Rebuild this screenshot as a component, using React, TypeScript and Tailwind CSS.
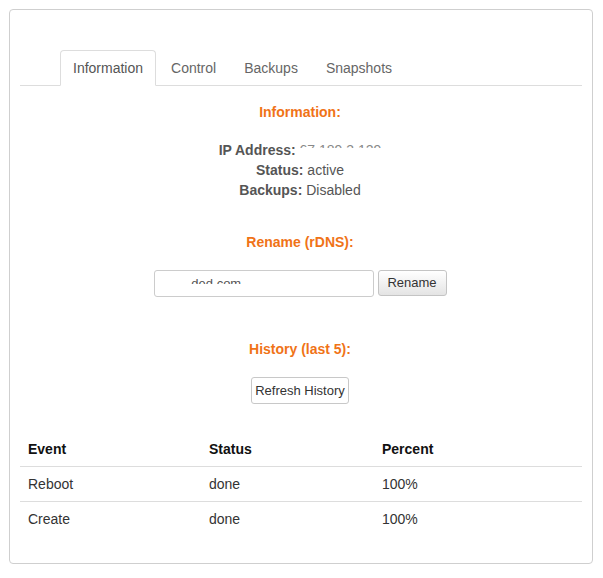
const tabs = ['Information', 'Control', 'Backups', 'Snapshots'];

const history = [
  { event: 'Reboot', status: 'done', percent: '100%' },
  { event: 'Create', status: 'done', percent: '100%' },
];

function SectionTitle({ children, className = '' }: { children: string; className?: string }) {
  return (
    <h4 className={`text-center text-[14px] font-bold leading-5 text-[#f07317] ${className}`}>{children}</h4>
  );
}

export default function App() {
  return (
    <div className="min-h-[578px] bg-white p-[9px] font-['Liberation_Sans',Arial,sans-serif] text-[14px] leading-5 text-[#555]">
      <div className="h-[555px] w-[584px] rounded-[4px] border border-[#cfcfcf] pl-[9px] pr-[11px] pt-[40px]">
        <div className="ml-px w-[562px]">
          {/* Tabs */}
          <ul className="flex border-b border-[#ddd] pl-[40px]">
            {tabs.map((tab, i) => (
              <li
                key={tab}
                className={`-mb-px mr-[2px] rounded-t-[4px] border px-[12px] py-[7px] ${
                  i === 0 ? 'border-[#ddd] border-b-white bg-white text-[#555]' : 'border-transparent text-[#666]'
                }`}
              >
                {tab}
              </li>
            ))}
          </ul>

          <div className="pr-[2px]">
            <SectionTitle className="mt-[16px]">Information:</SectionTitle>
            <div className="mt-[18px] text-center">
              <p>
                <b>IP Address:</b>{' '}
                <span className="inline-block h-[8px] overflow-hidden align-top leading-5 text-[#888]">67.189.3.129</span>
              </p>
              <p>
                <b>Status:</b> active
              </p>
              <p>
                <b>Backups:</b> Disabled
              </p>
            </div>

            <SectionTitle className="mt-[32px]">Rename (rDNS):</SectionTitle>
            <div className="mt-[18px] flex justify-center gap-[4px]">
              <div className="h-[27px] w-[220px] rounded-[3px] border border-[#ccc] bg-white pl-[26px]">
                <span className="inline-block h-[13px] overflow-hidden align-top text-[13px] leading-[25px] text-[#555]">
                  .. ded.com
                </span>
              </div>
              <button className="h-[26px] w-[69px] rounded-[3px] border border-[#c4c4c4] bg-gradient-to-b from-white to-[#e4e4e4] text-[13px] text-[#333]">
                Rename
              </button>
            </div>

            <SectionTitle className="mt-[42px]">History (last 5):</SectionTitle>
            <div className="mt-[18px] flex justify-center">
              <button className="h-[27px] w-[98px] rounded-[3px] border border-[#c8c8c8] bg-white text-[13px] text-[#333]">
                Refresh History
              </button>
            </div>
          </div>

          {/* History table */}
          <table className="mt-[28px] w-full border-collapse text-left leading-[18px]">
            <thead>
              <tr className="border-b border-[#ddd]">
                <th className="w-[181px] px-[8px] py-[8px] font-bold text-[#111]">Event</th>
                <th className="w-[173px] px-[8px] py-[8px] font-bold text-[#111]">Status</th>
                <th className="px-[8px] py-[8px] font-bold text-[#111]">Percent</th>
              </tr>
            </thead>
            <tbody>
              {history.map((row, i) => (
                <tr key={row.event} className={i > 0 ? 'border-t border-[#ddd]' : ''}>
                  <td className="px-[8px] py-[8px] text-[#333]">{row.event}</td>
                  <td className="px-[8px] py-[8px] text-[#333]">{row.status}</td>
                  <td className="px-[8px] py-[8px] text-[#333]">{row.percent}</td>
                </tr>
              ))}
            </tbody>
          </table>
        </div>
      </div>
    </div>
  );
}
